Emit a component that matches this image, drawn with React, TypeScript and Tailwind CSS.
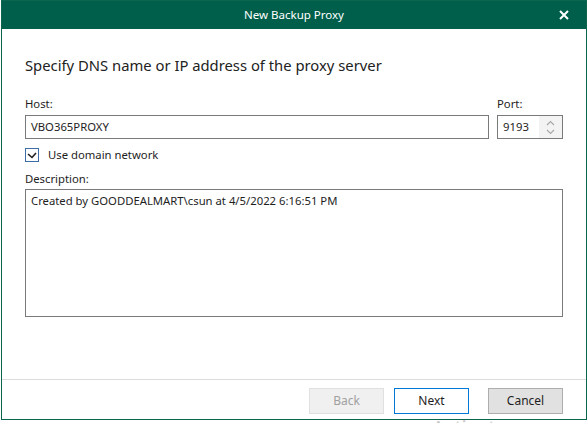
import React from "react";

export default function App() {
  return (
    <div className="relative h-[423px] w-[588px] overflow-hidden bg-white font-['Noto_Sans',sans-serif] text-[11.3px] text-[#1e1e1e]">
      <div className="ml-[1px] flex h-[420px] w-[586px] flex-col border border-[#0b6650] bg-white">
        {/* Title bar */}
        <div className="relative flex h-[28px] items-center justify-center bg-[#005f4b] text-[11.5px] text-white">
          New Backup Proxy
          <svg className="absolute right-[17px] top-[9px]" width="10" height="10" viewBox="0 0 10 10">
            <path d="M1 1 L9 9 M9 1 L1 9" stroke="white" strokeWidth="2" />
          </svg>
        </div>

        {/* Body */}
        <div className="flex flex-1 flex-col px-[23px]">
          <h1 className="mt-[25px] text-[14.8px] leading-[22px] text-[#222]">
            Specify DNS name or IP address of the proxy server
          </h1>

          <div className="mt-[20px] flex gap-[8px]">
            <div className="flex flex-1 flex-col">
              <label className="leading-[16px]">Host:</label>
              <div className="mt-[3px] flex h-[24px] items-center border border-[#7a7a7a] px-[5px]">
                VBO365PROXY
              </div>
            </div>
            <div className="flex w-[66px] flex-col">
              <label className="leading-[16px]">Port:</label>
              <div className="mt-[3px] flex h-[24px] items-center border border-[#7a7a7a]">
                <span className="flex-1 pl-[5px]">9193</span>
                <div className="flex h-full w-[23px] flex-col items-center justify-center bg-[#f3f3f3]">
                  <svg width="9" height="6" viewBox="0 0 9 6">
                    <path d="M1 5 L4.5 1.5 L8 5" stroke="#a8a8a8" strokeWidth="1.2" fill="none" />
                  </svg>
                  <svg className="mt-[3px]" width="9" height="6" viewBox="0 0 9 6">
                    <path d="M1 1 L4.5 4.5 L8 1" stroke="#a8a8a8" strokeWidth="1.2" fill="none" />
                  </svg>
                </div>
              </div>
            </div>
          </div>

          <div className="mt-[8px] flex items-center gap-[9px]">
            <div className="flex h-[14px] w-[14px] items-center justify-center border border-[#3c6ea5] bg-white">
              <svg width="10" height="8" viewBox="0 0 10 8">
                <path d="M1 3 L5 6.5 L9 2" stroke="#1e1e1e" strokeWidth="1.6" fill="none" />
              </svg>
            </div>
            <span className="leading-[16px]">Use domain network</span>
          </div>

          <label className="mt-[8px] leading-[16px]">Description:</label>
          <div className="mt-[2px] h-[128px] border border-[#7a7a7a] px-[5px] pt-[2px] leading-[18px]">
            Created by GOODDEALMART\csun at 4/5/2022 6:16:51 PM
          </div>
        </div>

        {/* Footer */}
        <div className="flex items-start justify-end border-t border-[#dcdcdc] pr-[23px] pt-[8px] pb-[5px]">
          <button className="h-[26px] w-[75px] border border-[#e0e0e0] bg-[#f0f0f0] text-[12px] text-[#a0a0a0]">Back</button>
          <button className="ml-[10px] h-[26px] w-[75px] border border-[#0078d7] bg-white text-[12px]">Next</button>
          <button className="ml-[19px] h-[26px] w-[75px] border border-[#adadad] bg-[#e1e1e1] text-[12px]">Cancel</button>
        </div>
      </div>

      <div className="absolute left-[432px] top-[416px] text-[20px] leading-[24px] text-[#c9c9c9]">
        Activate Windows
      </div>
    </div>
  );
}
